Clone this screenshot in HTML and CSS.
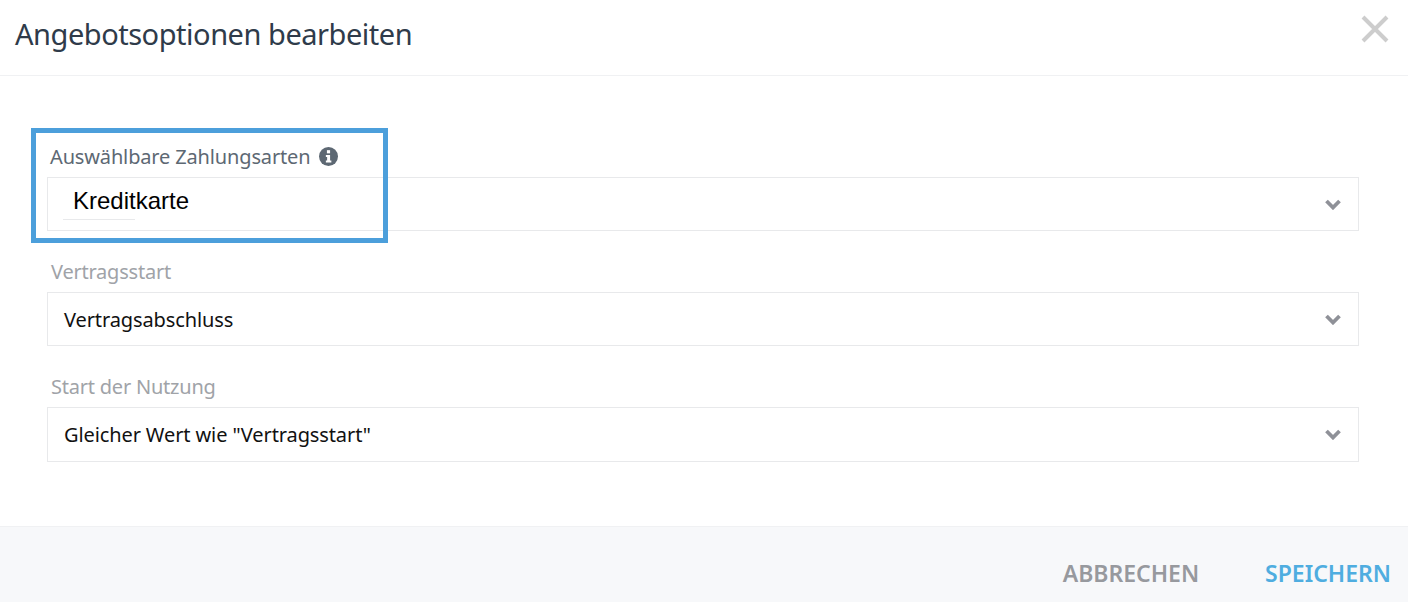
FILE: index.html
```html
<!DOCTYPE html>
<html lang="de">
<head>
<meta charset="UTF-8">
<meta name="viewport" content="width=device-width, initial-scale=1.0">
<title>Angebotsoptionen bearbeiten</title>
<link rel="stylesheet" href="styles.css">
</head>
<body>

<div class="modal">
    <div class="modal-header">
        <h1>Angebotsoptionen bearbeiten</h1>
        <svg class="close" width="28" height="28" viewBox="0 0 28 28"><path d="M2 2L26 26M26 2L2 26"/></svg>
    </div>

    <div class="modal-body">
        <div class="field field-first">
            <label class="label-dark">Auswählbare Zahlungsarten
                <svg class="info" width="19" height="19" viewBox="0 0 18 18"><circle cx="9" cy="9" r="9"/><rect class="info-mark" x="7.5" y="3" width="3" height="3"/><path class="info-mark" d="M6.5 7.5h4v5.2h1.2v2H6.5v-2h1.2V9.5H6.5z"/></svg>
            </label>
            <div class="select">
                <span class="chip">Kreditkarte</span>
                <svg class="chevron" width="16" height="11" viewBox="0 0 16 11"><path d="M1.5 2L8 8.5L14.5 2"/></svg>
            </div>
        </div>
        <div class="field">
            <label>Vertragsstart</label>
            <div class="select">
                <span>Vertragsabschluss</span>
                <svg class="chevron" width="16" height="11" viewBox="0 0 16 11"><path d="M1.5 2L8 8.5L14.5 2"/></svg>
            </div>
        </div>
        <div class="field">
            <label>Start der Nutzung</label>
            <div class="select select-tall">
                <span>Gleicher Wert wie "Vertragsstart"</span>
                <svg class="chevron" width="16" height="11" viewBox="0 0 16 11"><path d="M1.5 2L8 8.5L14.5 2"/></svg>
            </div>
        </div>
        <div class="highlight"></div>
    </div>

    <div class="modal-footer">
        <button class="btn-cancel">ABBRECHEN</button>
        <button class="btn-save">SPEICHERN</button>
    </div>
</div>

</body>
</html>
```

FILE: styles.css
```css
* {
    box-sizing: border-box;
}
body {
    margin: 0;
    background: #fff;
    font-family: "Noto Sans", Arial, sans-serif;
}
.modal {
    display: flex;
    flex-direction: column;
    height: 602px;
}
.modal-header {
    display: flex;
    justify-content: space-between;
    align-items: center;
    height: 76px;
    padding: 0 19px 9px 15px;
    border-bottom: 1px solid #f0f1f3;
}
.modal-header h1 {
    margin: 0;
    font-size: 29px;
    font-weight: 400;
    color: #2f3b4a;
    letter-spacing: -0.47px;
}
.close {
    margin-top: -8px;
}
.close path {
    fill: none;
    stroke: #cdcdcd;
    stroke-width: 4;
}
.modal-body {
    position: relative;
    flex: 1;
    padding: 65px 49px 0 47px;
}
.field {
    margin-bottom: 15px;
}
.field label {
    display: flex;
    align-items: center;
    gap: 9px;
    height: 46px;
    padding: 5px 0 0 4px;
    font-size: 20px;
    color: #a0a3a8;
    letter-spacing: -0.22px;
}
.field-first label {
    height: 36px;
    padding: 0 0 6px 3px;
    color: #5d6873;
    letter-spacing: -0.15px;
}
.info circle {
    fill: #5d6873;
}
.info .info-mark {
    fill: #fff;
}
.select {
    display: flex;
    justify-content: space-between;
    align-items: center;
    height: 54px;
    padding: 0 17px 0 16px;
    border: 1px solid #e8e9eb;
    font-size: 20px;
    color: #111;
    letter-spacing: -0.11px;
}
.select-tall {
    height: 55px;
}
.chip {
    margin: 0 0 3px -1px;
    padding: 0 0 3px 10px;
    width: 72px;
    border-bottom: 1px solid #e8e9eb;
    font-family: "Liberation Sans", Arial, sans-serif;
    font-size: 24px;
    line-height: 30px;
    letter-spacing: 0;
    white-space: nowrap;
    color: #000;
}
.chevron path {
    fill: none;
    stroke: #8f9198;
    stroke-width: 3.8;
}
.highlight {
    position: absolute;
    left: 31px;
    top: 52px;
    width: 357px;
    height: 115px;
    border: 5px solid #4c9fdb;
}
.modal-footer {
    display: flex;
    justify-content: flex-end;
    align-items: center;
    gap: 66px;
    height: 76px;
    padding: 16px 17px 0 0;
    background: #f7f8fa;
    border-top: 1px solid #f0f1f3;
}
.modal-footer button {
    padding: 0;
    border: 0;
    background: none;
    font-family: "Noto Sans", Arial, sans-serif;
    font-size: 23px;
    font-weight: 600;
    letter-spacing: -0.02px;
}
.btn-cancel {
    color: #97999e;
}
.btn-save {
    color: #4fade0;
}
```
